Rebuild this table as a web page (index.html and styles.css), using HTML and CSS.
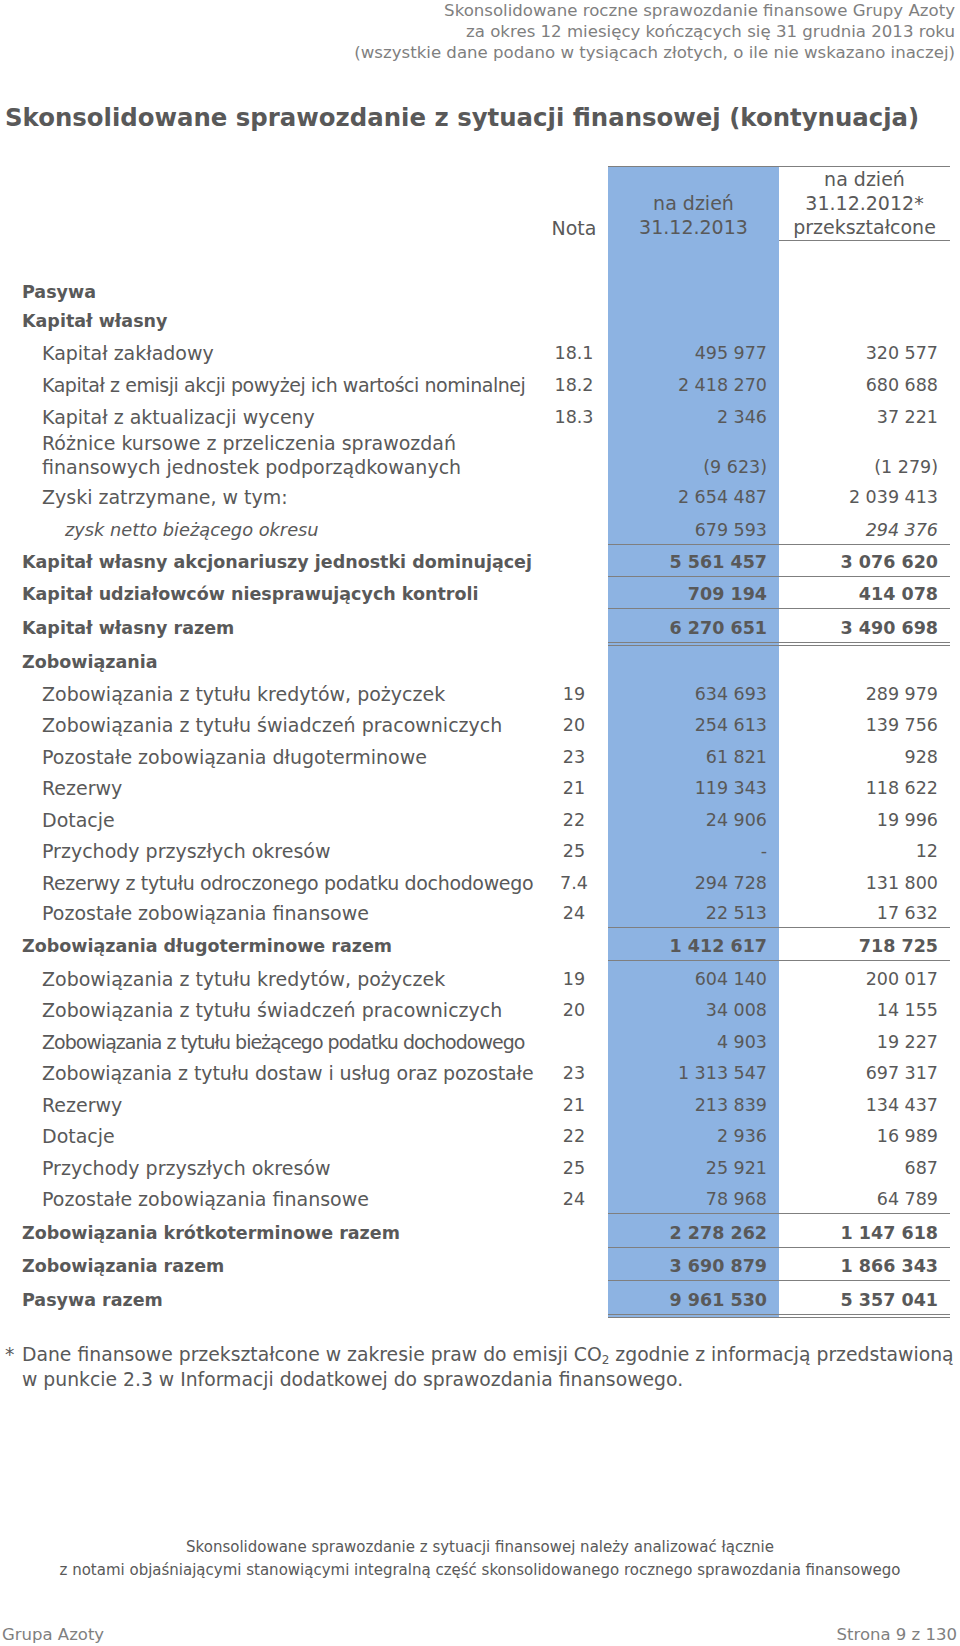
FILE: index.html
```html
<!DOCTYPE html>
<html lang="pl">
<head>
<meta charset="utf-8">
<title>Skonsolidowane sprawozdanie z sytuacji finansowej</title>
<link rel="stylesheet" href="styles.css">
</head>
<body>
<div class="page">
  <header class="doc-header">
    <div>Skonsolidowane roczne sprawozdanie finansowe Grupy Azoty</div>
    <div>za okres 12 miesięcy kończących się 31 grudnia 2013 roku</div>
    <div>(wszystkie dane podano w tysiącach złotych, o ile nie wskazano inaczej)</div>
  </header>

  <h1 class="title">Skonsolidowane sprawozdanie z sytuacji finansowej (kontynuacja)</h1>

  <div class="sheet">
    <div class="row head">
      <div class="c-label"></div>
      <div class="c-note">Nota</div>
      <div class="c-v1">na dzień<br>31.12.2013</div>
      <div class="c-v2">na dzień<br>31.12.2012*<br>przekształcone</div>
    </div>
    <div class="row spacer">
      <div class="c-label"></div><div class="c-note"></div><div class="c-v1"></div><div class="c-v2"></div>
    </div>

    <div class="row sec">
      <div class="c-label b l0">Pasywa</div><div class="c-note"></div><div class="c-v1"></div><div class="c-v2"></div>
    </div>
    <div class="row sec">
      <div class="c-label b l0">Kapitał własny</div><div class="c-note"></div><div class="c-v1"></div><div class="c-v2"></div>
    </div>
    <div class="row eq">
      <div class="c-label l1">Kapitał zakładowy</div><div class="c-note">18.1</div><div class="c-v1">495 977</div><div class="c-v2">320 577</div>
    </div>
    <div class="row eq">
      <div class="c-label l1 sq-a">Kapitał z emisji akcji powyżej ich wartości nominalnej</div><div class="c-note">18.2</div><div class="c-v1">2 418 270</div><div class="c-v2">680 688</div>
    </div>
    <div class="row eq">
      <div class="c-label l1">Kapitał z aktualizacji wyceny</div><div class="c-note">18.3</div><div class="c-v1">2 346</div><div class="c-v2">37 221</div>
    </div>
    <div class="row two">
      <div class="c-label l1">Różnice kursowe z przeliczenia sprawozdań<br>finansowych jednostek podporządkowanych</div><div class="c-note"></div><div class="c-v1">(9 623)</div><div class="c-v2">(1 279)</div>
    </div>
    <div class="row eq">
      <div class="c-label l1">Zyski zatrzymane, w tym:</div><div class="c-note"></div><div class="c-v1">2 654 487</div><div class="c-v2">2 039 413</div>
    </div>
    <div class="row tall line">
      <div class="c-label l2 i">zysk netto bieżącego okresu</div><div class="c-note"></div><div class="c-v1">679 593</div><div class="c-v2 i">294 376</div>
    </div>
    <div class="row eq line">
      <div class="c-label b l0">Kapitał własny akcjonariuszy jednostki dominującej</div><div class="c-note"></div><div class="c-v1 b">5 561 457</div><div class="c-v2 b">3 076 620</div>
    </div>
    <div class="row eq line">
      <div class="c-label b l0">Kapitał udziałowców niesprawujących kontroli</div><div class="c-note"></div><div class="c-v1 b">709 194</div><div class="c-v2 b">414 078</div>
    </div>
    <div class="row dbl">
      <div class="c-label b l0">Kapitał własny razem</div><div class="c-note"></div><div class="c-v1 b">6 270 651</div><div class="c-v2 b">3 490 698</div>
    </div>

    <div class="row sec2">
      <div class="c-label b l0">Zobowiązania</div><div class="c-note"></div><div class="c-v1"></div><div class="c-v2"></div>
    </div>
    <div class="row">
      <div class="c-label l1">Zobowiązania z tytułu kredytów, pożyczek</div><div class="c-note">19</div><div class="c-v1">634 693</div><div class="c-v2">289 979</div>
    </div>
    <div class="row">
      <div class="c-label l1">Zobowiązania z tytułu świadczeń pracowniczych</div><div class="c-note">20</div><div class="c-v1">254 613</div><div class="c-v2">139 756</div>
    </div>
    <div class="row">
      <div class="c-label l1">Pozostałe zobowiązania długoterminowe</div><div class="c-note">23</div><div class="c-v1">61 821</div><div class="c-v2">928</div>
    </div>
    <div class="row">
      <div class="c-label l1">Rezerwy</div><div class="c-note">21</div><div class="c-v1">119 343</div><div class="c-v2">118 622</div>
    </div>
    <div class="row">
      <div class="c-label l1">Dotacje</div><div class="c-note">22</div><div class="c-v1">24 906</div><div class="c-v2">19 996</div>
    </div>
    <div class="row">
      <div class="c-label l1">Przychody przyszłych okresów</div><div class="c-note">25</div><div class="c-v1">-</div><div class="c-v2">12</div>
    </div>
    <div class="row">
      <div class="c-label l1 sq-b">Rezerwy z tytułu odroczonego podatku dochodowego</div><div class="c-note">7.4</div><div class="c-v1">294 728</div><div class="c-v2">131 800</div>
    </div>
    <div class="row line">
      <div class="c-label l1">Pozostałe zobowiązania finansowe</div><div class="c-note">24</div><div class="c-v1">22 513</div><div class="c-v2">17 632</div>
    </div>
    <div class="row sum line">
      <div class="c-label b l0">Zobowiązania długoterminowe razem</div><div class="c-note"></div><div class="c-v1 b">1 412 617</div><div class="c-v2 b">718 725</div>
    </div>
    <div class="row">
      <div class="c-label l1">Zobowiązania z tytułu kredytów, pożyczek</div><div class="c-note">19</div><div class="c-v1">604 140</div><div class="c-v2">200 017</div>
    </div>
    <div class="row">
      <div class="c-label l1">Zobowiązania z tytułu świadczeń pracowniczych</div><div class="c-note">20</div><div class="c-v1">34 008</div><div class="c-v2">14 155</div>
    </div>
    <div class="row">
      <div class="c-label l1 sq-c">Zobowiązania z tytułu bieżącego podatku dochodowego</div><div class="c-note"></div><div class="c-v1">4 903</div><div class="c-v2">19 227</div>
    </div>
    <div class="row">
      <div class="c-label l1 sq-d">Zobowiązania z tytułu dostaw i usług oraz pozostałe</div><div class="c-note">23</div><div class="c-v1">1 313 547</div><div class="c-v2">697 317</div>
    </div>
    <div class="row">
      <div class="c-label l1">Rezerwy</div><div class="c-note">21</div><div class="c-v1">213 839</div><div class="c-v2">134 437</div>
    </div>
    <div class="row">
      <div class="c-label l1">Dotacje</div><div class="c-note">22</div><div class="c-v1">2 936</div><div class="c-v2">16 989</div>
    </div>
    <div class="row">
      <div class="c-label l1">Przychody przyszłych okresów</div><div class="c-note">25</div><div class="c-v1">25 921</div><div class="c-v2">687</div>
    </div>
    <div class="row eq line">
      <div class="c-label l1">Pozostałe zobowiązania finansowe</div><div class="c-note">24</div><div class="c-v1">78 968</div><div class="c-v2">64 789</div>
    </div>
    <div class="row big line">
      <div class="c-label b l0">Zobowiązania krótkoterminowe razem</div><div class="c-note"></div><div class="c-v1 b">2 278 262</div><div class="c-v2 b">1 147 618</div>
    </div>
    <div class="row sum line">
      <div class="c-label b l0">Zobowiązania razem</div><div class="c-note"></div><div class="c-v1 b">3 690 879</div><div class="c-v2 b">1 866 343</div>
    </div>
    <div class="row dbl">
      <div class="c-label b l0">Pasywa razem</div><div class="c-note"></div><div class="c-v1 b">9 961 530</div><div class="c-v2 b">5 357 041</div>
    </div>
  </div>

  <p class="footnote">
    <span class="star">*</span><span>Dane finansowe przekształcone w zakresie praw do emisji CO<sub>2</sub> zgodnie z informacją przedstawioną<br>w punkcie 2.3 w Informacji dodatkowej do sprawozdania finansowego.</span>
  </p>

  <div class="doc-note">
    <div>Skonsolidowane sprawozdanie z sytuacji finansowej należy analizować łącznie</div>
    <div>z notami objaśniającymi stanowiącymi integralną część skonsolidowanego rocznego sprawozdania finansowego</div>
  </div>

  <footer class="doc-footer">
    <span>Grupa Azoty</span>
    <span>Strona 9 z 130</span>
  </footer>
</div>
</body>
</html>
```

FILE: styles.css
```css
* { box-sizing: border-box; }

html, body {
  margin: 0;
  padding: 0;
  background: #ffffff;
}

body {
  font-family: "DejaVu Sans", "Liberation Sans", sans-serif;
  color: #595959;
}

.page {
  width: 960px;
  height: 1646px;
  padding: 0 5px 0 5px;
}

.doc-header {
  text-align: right;
  font-size: 16.6px;
  line-height: 21px;
  color: #7f7f7f;
}

.title {
  margin: 40px 0 0 0;
  font-size: 24.4px;
  line-height: 30px;
  font-weight: bold;
  color: #595959;
  white-space: nowrap;
}

.sheet {
  margin-top: 33px;
  width: 945px;
}

.row {
  display: grid;
  grid-template-columns: 535px 68px 171px 171px;
  height: 31.5px;
  align-items: stretch;
}

.row > div {
  display: flex;
  align-items: flex-end;
  padding-bottom: 2px;
  line-height: 24px;
  white-space: nowrap;
}

.c-label {
  font-size: 19px;
}

.c-note {
  justify-content: center;
  font-size: 17.5px;
}

.c-v1, .c-v2 {
  justify-content: flex-end;
  padding-right: 12px;
  font-size: 17.5px;
}

.c-v1 {
  background: #8db3e2;
}

.l0 { padding-left: 17px; }
.l1 { padding-left: 37px; }
.l2 { padding-left: 60px; }

.b { font-weight: bold; }
.c-label.b { font-size: 17.5px; }
.i { font-style: italic; }
.c-label.i { font-size: 17.8px; }

.sq-a { letter-spacing: -0.45px; }
.sq-b { letter-spacing: -0.35px; }
.sq-c { letter-spacing: -1px; }
.sq-d { letter-spacing: -0.1px; }

/* header row */
.row.head {
  height: 73px;
}
.row.head > div {
  padding-bottom: 1px;
  font-size: 19px;
}
.row.head .c-v1,
.row.head .c-v2 {
  justify-content: center;
  text-align: center;
  padding-right: 0;
  border-top: 1px solid #7f7f7f;
  border-bottom: 1px solid #7f7f7f;
}

.row.spacer { height: 38px; }
.row.sec { height: 29px; }
.row.sec2 { height: 30px; }
.row.eq { height: 32px; }
.row.tall { height: 34px; }
.row.two { height: 48px; }
.row.sum { height: 33px; }
.row.big { height: 34px; }

.row.line .c-v1,
.row.line .c-v2 {
  border-bottom: 1px solid #7f7f7f;
}
.row.line .c-label,
.row.line .c-note {
  padding-bottom: 3px;
}

.row.dbl { height: 37px; }
.row.dbl .c-v1,
.row.dbl .c-v2 {
  border-bottom: 4px double #7f7f7f;
}
.row.dbl .c-label,
.row.dbl .c-note {
  padding-bottom: 6px;
}

.footnote {
  margin: 24px 0 0 0;
  display: flex;
  font-size: 18.8px;
  line-height: 25px;
  color: #595959;
  white-space: nowrap;
}
.footnote .star {
  width: 17px;
  flex: none;
}
.footnote sub {
  font-size: 12px;
  line-height: 0;
  vertical-align: -3px;
}

.doc-note {
  margin-top: 144px;
  text-align: center;
  font-size: 15px;
  line-height: 23px;
  color: #595959;
}

.doc-footer {
  margin-top: 43px;
  display: flex;
  justify-content: space-between;
  font-size: 16.5px;
  line-height: 20px;
  color: #7f7f7f;
  margin-left: -3px;
  margin-right: -2px;
}
```
